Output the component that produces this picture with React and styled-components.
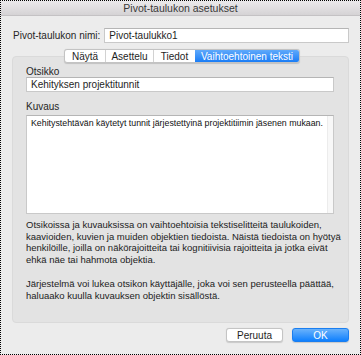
import React from 'react';
import styled, { createGlobalStyle } from 'styled-components';

const GlobalStyle = createGlobalStyle`
  html, body {
    margin: 0;
    padding: 0;
    background: #ececec;
  }
  * {
    box-sizing: border-box;
  }
`;

const Window = styled.div`
  width: 361px;
  height: 355px;
  border: 1px dotted #000;
  background: #ececec;
  display: flex;
  flex-direction: column;
  font-family: 'Liberation Sans', Arial, sans-serif;
  font-size: 10px;
  color: #262626;
  overflow: hidden;
`;

const TitleBar = styled.div`
  height: 15px;
  flex-shrink: 0;
  background: linear-gradient(#ebe9eb, #d5d3d5);
  border-bottom: 1px solid #c4c2c4;
  display: flex;
  align-items: center;
  justify-content: center;
  font-size: 10.5px;
  color: #3a3a3a;
`;

const Body = styled.div`
  flex: 1;
  display: flex;
  flex-direction: column;
  padding: 12px 11px 0 11px;
`;

const NameRow = styled.div`
  display: flex;
  align-items: center;
  gap: 4px;
  padding-left: 1px;
`;

const Label = styled.label`
  font-size: 10px;
  color: #262626;
  white-space: nowrap;
`;

const TextInput = styled.div`
  flex: ${(p) => (p.$grow ? 1 : 'none')};
  height: 15px;
  background: #fff;
  border: 1px solid #c9c9c9;
  border-top-color: #b5b5b5;
  padding: 0 4px;
  display: flex;
  align-items: center;
  font-size: 10px;
  color: #1e1e1e;
`;

const TabWrap = styled.div`
  margin-top: 6px;
  display: flex;
  flex-direction: column;
`;

const Tabs = styled.div`
  position: relative;
  z-index: 1;
  align-self: flex-start;
  margin-left: 52px;
  height: 14px;
  display: flex;
  background: #fff;
  border: 1px solid #c3c3c3;
  border-radius: 3px;
  box-shadow: 0 0.5px 1px rgba(0, 0, 0, 0.15);
  overflow: hidden;
`;

const Tab = styled.div`
  width: ${(p) => p.$w}px;
  display: flex;
  align-items: center;
  justify-content: center;
  font-size: 10px;
  color: ${(p) => (p.$active ? '#fff' : '#1e1e1e')};
  background: ${(p) =>
    p.$active ? 'linear-gradient(#5fa9fb, #1a7df6)' : 'transparent'};
  border-left: ${(p) => (p.$first || p.$active ? 'none' : '1px solid #d2d2d2')};
`;

const Group = styled.div`
  margin-top: -7px;
  height: 267px;
  background: #e3e3e3;
  border: 1px solid #dadada;
  border-radius: 4px;
  padding: 10px 14px 0 13px;
  display: flex;
  flex-direction: column;
`;

const FieldLabel = styled.div`
  font-size: 10px;
  color: #262626;
  line-height: 10px;
  margin-bottom: ${(p) => p.$mb || 0}px;
`;

const Field = styled.div`
  margin-bottom: ${(p) => p.$mb || 0}px;
`;

const TextArea = styled.div`
  height: 99px;
  background: #fff;
  border: 1px solid #c9c9c9;
  border-top-color: #b5b5b5;
  display: flex;
`;

const AreaText = styled.div`
  flex: 1;
  padding: 1px 4px;
  font-size: 8.8px;
  line-height: 12px;
  color: #111;
  white-space: nowrap;
`;

const ScrollTrack = styled.div`
  width: 10px;
  background: #f8f8f8;
  border-left: 1px solid #ececec;
`;

const Help = styled.p`
  margin: ${(p) => p.$mt}px 0 0 0;
  font-size: 9.5px;
  line-height: 11.7px;
  color: #222;
  white-space: nowrap;
`;

const Footer = styled.div`
  display: flex;
  justify-content: flex-end;
  gap: 9px;
  margin-top: 5px;
`;

const Button = styled.div`
  width: 57px;
  height: 14px;
  border-radius: 3px;
  display: flex;
  align-items: center;
  justify-content: center;
  font-size: 10px;
  color: ${(p) => (p.$primary ? '#fff' : '#1e1e1e')};
  background: ${(p) =>
    p.$primary ? 'linear-gradient(#6ab2fb, #0f80fe)' : '#fff'};
  border: 1px solid ${(p) => (p.$primary ? '#1a7ef0' : '#c4c4c4')};
  box-shadow: 0 0.5px 1px rgba(0, 0, 0, 0.15);
`;

const tabs = [
  { label: 'Näytä', w: 40 },
  { label: 'Asettelu', w: 48 },
  { label: 'Tiedot', w: 42 },
  { label: 'Vaihtoehtoinen teksti', w: 104, active: true },
];

const App = () => (
  <>
    <GlobalStyle />
    <Window>
      <TitleBar>Pivot-taulukon asetukset</TitleBar>
      <Body>
        <NameRow>
          <Label>Pivot-taulukon nimi:</Label>
          <TextInput $grow>Pivot-taulukko1</TextInput>
        </NameRow>
        <TabWrap>
          <Tabs>
            {tabs.map((t, i) => (
              <Tab key={t.label} $w={t.w} $active={t.active} $first={i === 0}>
                {t.label}
              </Tab>
            ))}
          </Tabs>
          <Group>
            <Field $mb={10}>
              <FieldLabel>Otsikko</FieldLabel>
              <TextInput>Kehityksen projektitunnit</TextInput>
            </Field>
            <Field>
              <FieldLabel $mb={3}>Kuvaus</FieldLabel>
              <TextArea>
                <AreaText>
                  Kehitystehtävän käytetyt tunnit järjestettyinä projektitiimin jäsenen mukaan.
                </AreaText>
                <ScrollTrack />
              </TextArea>
            </Field>
            <Help $mt={5}>
              Otsikoissa ja kuvauksissa on vaihtoehtoisia tekstiselitteitä taulukoiden,
              <br />
              kaavioiden, kuvien ja muiden objektien tiedoista. Näistä tiedoista on hyötyä
              <br />
              henkilöille, joilla on näkörajoitteita tai kognitiivisia rajoitteita ja jotka eivät
              <br />
              ehkä näe tai hahmota objektia.
            </Help>
            <Help $mt={12}>
              Järjestelmä voi lukea otsikon käyttäjälle, joka voi sen perusteella päättää,
              <br />
              haluaako kuulla kuvauksen objektin sisällöstä.
            </Help>
          </Group>
        </TabWrap>
        <Footer>
          <Button>Peruuta</Button>
          <Button $primary>OK</Button>
        </Footer>
      </Body>
    </Window>
  </>
);

export default App;
